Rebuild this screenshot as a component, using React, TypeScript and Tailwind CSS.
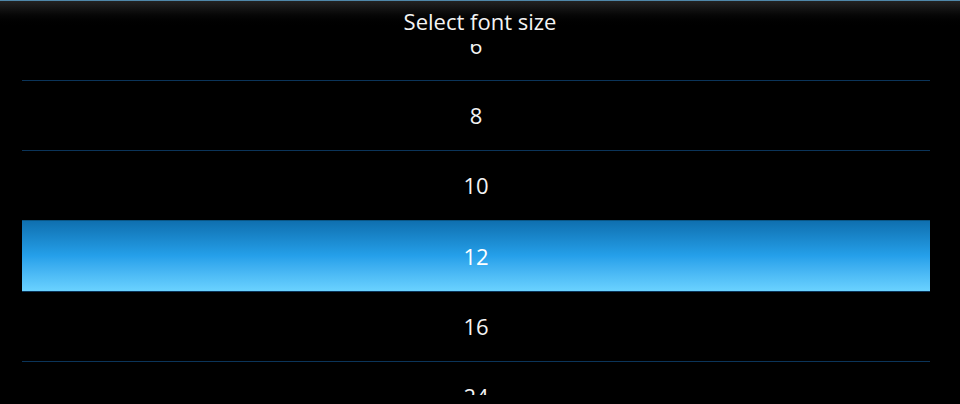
import React from "react";

const sizes = ["6", "8", "10", "12", "16", "24"];

export default function App() {
  return (
    <div
      className="relative flex h-[404px] w-[960px] flex-col overflow-hidden bg-black text-white"
      style={{ fontFamily: '"Open Sans", "Noto Sans", sans-serif' }}
    >
      <div className="relative h-[44px] shrink-0">
        <div className="h-[1px] bg-[#4f87a9]" />
        <div className="h-[28px] bg-gradient-to-b from-[#232323] to-black" />
        <div className="absolute inset-x-0 top-[6px] text-center text-[22px] leading-[30px] text-[#f4f4f4]">
          Select font size
        </div>
      </div>
      <div className="ml-[22px] mr-[30px] h-[351px] overflow-hidden">
        <div className="-mt-[34px] flex flex-col">
          {sizes.map((s) => {
            const selected = s === "12";
            return (
              <div
                key={s}
                className={
                  selected
                    ? "flex h-[71px] items-center justify-center border-t border-[#0a5686] bg-gradient-to-b from-[#0f70b0] via-[#25a0ea] to-[#6ad2ff] text-[22px] text-white"
                    : "flex h-[70px] items-center justify-center border-t border-[#0b3459] text-[22px] text-[#f4f4f4]"
                }
              >
                {s}
              </div>
            );
          })}
        </div>
      </div>
    </div>
  );
}
